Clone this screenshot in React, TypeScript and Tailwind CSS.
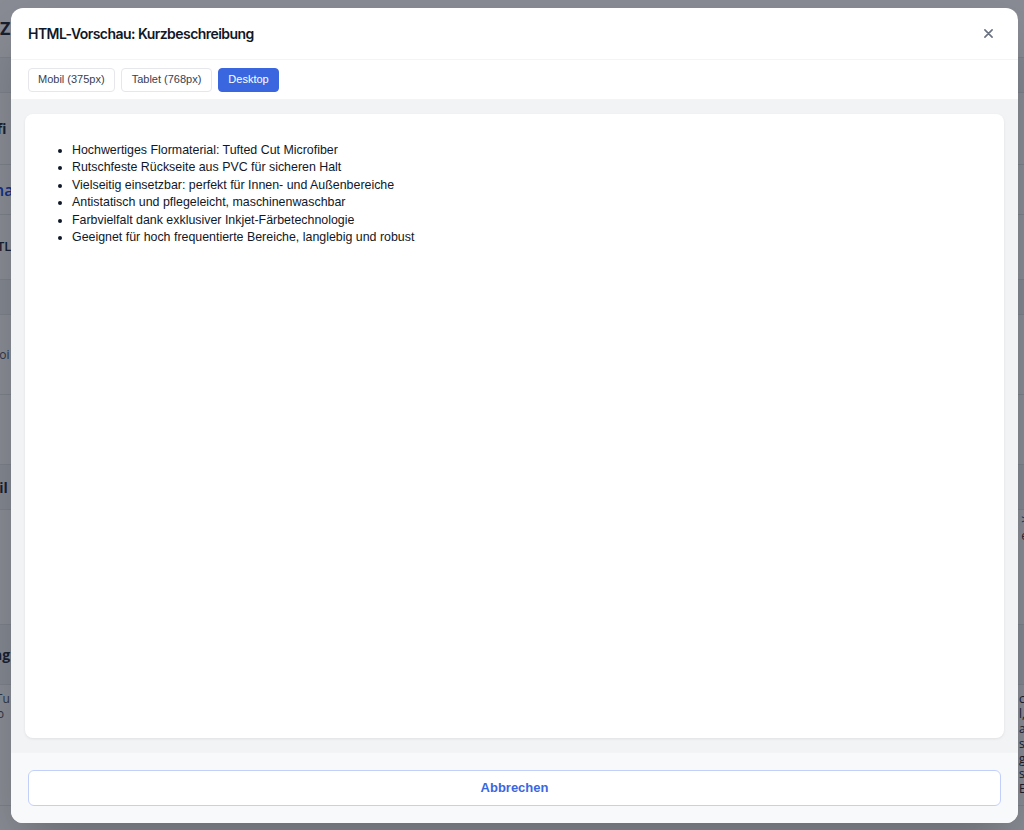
import React from "react";

const items = [
  "Hochwertiges Flormaterial: Tufted Cut Microfiber",
  "Rutschfeste Rückseite aus PVC für sicheren Halt",
  "Vielseitig einsetzbar: perfekt für Innen- und Außenbereiche",
  "Antistatisch und pflegeleicht, maschinenwaschbar",
  "Farbvielfalt dank exklusiver Inkjet-Färbetechnologie",
  "Geeignet für hoch frequentierte Bereiche, langlebig und robust",
];

function BackgroundPage() {
  return (
    <div className="flex h-[830px] w-[1024px] flex-col overflow-hidden bg-white text-[14px] text-gray-800" style={{ fontFamily: '"Open Sans", "Noto Sans", sans-serif' }}>
      <div className="flex h-[58px] items-center justify-between border-b border-gray-200 px-0">
        <span className="text-[18px] font-bold">Z</span>
        <span></span>
      </div>
      <div className="h-[35px] border-b border-gray-200 bg-gray-100"></div>
      <div className="flex h-[72px] items-center justify-between border-b border-gray-200">
        <span className="ml-[-12px] text-[14px] font-bold">ofi</span>
        <span></span>
      </div>
      <div className="flex h-[50px] items-center border-b border-gray-200">
        <span className="ml-[-6px] text-[16px] font-semibold text-blue-700">na</span>
      </div>
      <div className="flex h-[65px] items-center border-b border-gray-200">
        <span className="ml-[-3px] text-[13px] font-semibold">TL</span>
      </div>
      <div className="h-[35px] border-b border-gray-200 bg-gray-100"></div>
      <div className="flex h-[80px] items-center border-b border-gray-200">
        <span className="ml-[-8px] text-[12px] text-gray-600">hoi</span>
      </div>
      <div className="h-[70px] border-b border-gray-200"></div>
      <div className="flex h-[45px] items-center justify-between border-b border-gray-200 bg-gray-100">
        <span className="ml-[-9px] text-[14px] font-bold">eil</span>
        <span className="mr-[-20px] text-[12px] text-gray-700">ch</span>
      </div>
      <div className="flex h-[60px] flex-col items-end justify-start pt-[2px] text-[12px] leading-[16px] text-gray-700">
        <span className="mr-[-4px]">&gt;</span>
        <span className="mr-[-4px]">e</span>
      </div>
      <div className="h-[55px] border-b border-gray-200"></div>
      <div className="flex h-[60px] items-center border-b border-gray-200 bg-gray-100">
        <span className="ml-[-7px] text-[14px] font-bold">ng</span>
      </div>
      <div className="flex h-[120px] items-start justify-between pt-[6px] text-[12px] leading-[15px] text-gray-600">
        <div className="ml-[-8px] flex flex-col">
          <span>-Tu</span>
          <span>"b</span>
        </div>
        <div className="mr-[-8px] flex flex-col text-gray-800">
          <span>ch</span>
          <span>l,</span>
          <span>a</span>
          <span>st</span>
          <span>gl</span>
          <span>s</span>
          <span>E</span>
        </div>
      </div>
      <div className="flex-1 border-t border-gray-200"></div>
    </div>
  );
}

export default function App() {
  return (
    <div className="relative h-[830px] w-[1024px] overflow-hidden">
      <BackgroundPage />
      <div className="absolute inset-0 bg-[#111827]/50"></div>
      <div className="absolute inset-0 pb-[7px] pl-[11px] pr-[6px] pt-[8px]">
        <div
          className="flex h-full flex-col overflow-hidden rounded-[12px] bg-white shadow-2xl"
          style={{ fontFamily: '"Liberation Sans", Arial, sans-serif' }}
        >
          <div className="flex h-[52px] shrink-0 items-center justify-between border-b border-gray-100 pl-[17px] pr-[22px]">
            <h2 className="text-[14px] font-semibold tracking-[-0.55px] text-gray-900" style={{ fontFamily: 'Inter, "Noto Sans", sans-serif' }}>
              HTML-Vorschau: Kurzbeschreibung
            </h2>
            <button className="flex h-[16px] w-[16px] items-center justify-center text-gray-500">
              <svg width="9" height="9" viewBox="0 0 10 10" fill="none" stroke="currentColor" strokeWidth="1.8" strokeLinecap="round">
                <path d="M1 1 L9 9 M9 1 L1 9" />
              </svg>
            </button>
          </div>
          <div className="flex h-[40px] shrink-0 items-center gap-[6px] border-b border-gray-100 px-[17px]">
            <button className="h-[24px] rounded-[4px] border border-gray-200 bg-white px-[9px] text-[11px] text-gray-700">
              Mobil (375px)
            </button>
            <button className="h-[24px] rounded-[4px] border border-gray-200 bg-white px-[10px] text-[11px] text-gray-700">
              Tablet (768px)
            </button>
            <button className="h-[24px] rounded-[4px] border border-[#3a67e0] bg-[#3a67e0] px-[9px] text-[11px] text-white">
              Desktop
            </button>
          </div>
          <div className="flex min-h-0 flex-1 flex-col bg-[#f2f3f5] px-[14px] py-[14px]">
            <div className="flex-1 rounded-[8px] bg-white pl-[24px] pt-[28px] shadow-[0_1px_3px_rgba(0,0,0,0.08)]">
              <ul className="list-disc pl-[23px] text-[12.4px] leading-[17.4px] text-gray-900">
                {items.map((t) => (
                  <li key={t}>{t}</li>
                ))}
              </ul>
            </div>
          </div>
          <div className="flex h-[71px] shrink-0 items-center border-t border-gray-100 bg-[#f8f9fb] px-[17px]">
            <button className="h-[36px] w-full rounded-[6px] border border-[#c2cffa] bg-white text-[13px] font-bold text-[#3a67e0]">
              Abbrechen
            </button>
          </div>
        </div>
      </div>
    </div>
  );
}
